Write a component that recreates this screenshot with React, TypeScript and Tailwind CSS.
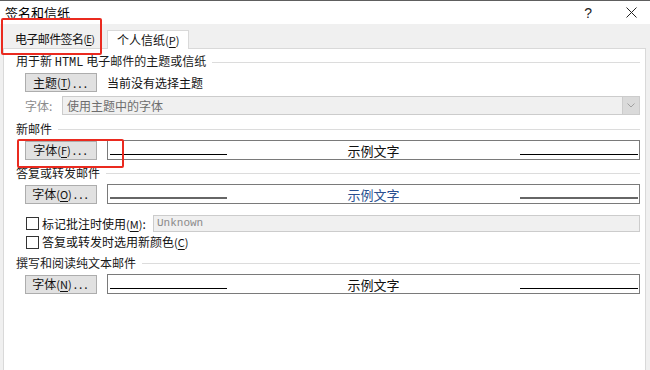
import React from 'react';

const font = { fontFamily: '"Noto Sans CJK SC", "Noto Sans", sans-serif' };

// mnemonic letter like (E), underlined as in Win32 dialogs
const Mn: React.FC<{ k: string; small?: boolean }> = ({ k, small }) => (
  <span className={small ? 'text-[10px]' : 'text-[11px]'}>
    (<span className="underline underline-offset-2">{k}</span>)
  </span>
);

const Dots: React.FC = () => <span className="tracking-[2px] pl-[2px]">...</span>;

const SectionHeader: React.FC<{ children: React.ReactNode; mt: string }> = ({ children, mt }) => (
  <div className={`flex items-center h-[16px] pl-[12px] pr-[5px] ${mt}`}>
    <span className="text-[12px] leading-[16px] text-[#1a1a1a] whitespace-nowrap">{children}</span>
    <div className="flex-1 h-px bg-[#dcdcdc] ml-[6px]" />
  </div>
);

const Btn: React.FC<{ children: React.ReactNode }> = ({ children }) => (
  <div className="w-[72px] h-[19px] bg-[#e1e1e1] border border-[#adadad] flex items-center justify-center text-[12px] leading-none text-[#111] flex-shrink-0 whitespace-nowrap">
    {children}
  </div>
);

const Preview: React.FC<{ color: string; lineCls: string }> = ({ color, lineCls }) => (
  <div className="relative flex-1 h-[20px] ml-[10px] bg-white border border-[#7a7a7a] flex items-center justify-center">
    <span className={`text-[13px] leading-none ${color}`}>示例文字</span>
    <div className={`absolute left-[2px] bottom-[4px] w-[117px] ${lineCls}`} />
    <div className={`absolute right-[1px] bottom-[4px] w-[118px] ${lineCls}`} />
  </div>
);

const FontRow: React.FC<{ k: string; mt: string; color?: string; lineCls?: string }> = ({
  k,
  mt,
  color = 'text-[#111]',
  lineCls = 'h-px bg-black',
}) => (
  <div className={`flex items-center pl-[21px] pr-[5px] ${mt}`}>
    <Btn>
      字体<Mn k={k} />
      <Dots />
    </Btn>
    <Preview color={color} lineCls={lineCls} />
  </div>
);

const Checkbox: React.FC = () => (
  <div className="w-[13px] h-[13px] border border-[#333] bg-white flex-shrink-0" />
);

export default function App() {
  return (
    <div className="relative w-[650px] h-[370px] overflow-hidden bg-white flex flex-col" style={font}>
      {/* title bar */}
      <div className="h-[24px] border-t border-[#5e5e5e] flex items-center pl-[5px] pr-[12px] bg-white">
        <span className="text-[13px] leading-none text-black">签名和信纸</span>
        <div className="flex-1" />
        <span className="text-[14px] leading-none text-[#222] mr-[34px]" style={{ fontFamily: '"Liberation Sans", sans-serif' }}>?</span>
        <svg width="11" height="11" viewBox="0 0 11 11" className="mr-[1px]">
          <path d="M0.5 0.5 L10.5 10.5 M10.5 0.5 L0.5 10.5" stroke="#222" strokeWidth="1" />
        </svg>
      </div>

      {/* body */}
      <div className="flex-1 bg-[#f0f0f0] pl-[3px] pr-[4px] flex flex-col">
        {/* tabs */}
        <div className="h-[24px] flex items-end">
          <div className="h-[18px] w-[104px] flex items-center pl-[12px] text-[12px] leading-none text-[#111] whitespace-nowrap tracking-[-0.6px]">
            电子邮件签名<Mn k="E" small />
          </div>
          <div className="relative z-10 -mb-px h-[19px] w-[82px] bg-white border border-b-0 border-[#d9d9d9] flex items-center pl-[9px] text-[12px] leading-none text-[#111] whitespace-nowrap">
            个人信纸<Mn k="P" />
          </div>
        </div>

        {/* panel */}
        <div className="flex-1 bg-white border border-[#d9d9d9] border-b-0 flex flex-col">
          <SectionHeader mt="mt-[5px]">
            用于新{' '}
            <span className="text-[12px]" style={{ fontFamily: '"Liberation Mono", monospace' }}>
              HTML
            </span>{' '}
            电子邮件的主题或信纸
          </SectionHeader>

          <div className="flex items-center pl-[21px] mt-[3px] h-[19px]">
            <Btn>
              主题<Mn k="T" />
              <Dots />
            </Btn>
            <span className="ml-[10px] text-[12px] leading-none text-[#111]">当前没有选择主题</span>
          </div>

          <div className="flex items-center pl-[21px] pr-[5px] mt-[4px] h-[19px]">
            <span className="w-[37px] text-[12px] leading-none text-[#8c8c8c]">字体:</span>
            <div className="flex-1 h-[19px] bg-[#f0f0f0] border border-[#cccccc] flex items-center">
              <span className="pl-[4px] flex-1 text-[12px] leading-none text-[#6d6d6d]">使用主题中的字体</span>
              <div className="w-[17px] h-full bg-[#dadada] border-l border-[#cccccc] flex items-center justify-center">
                <svg width="8" height="5" viewBox="0 0 8 5">
                  <path d="M0.5 0.5 L4 4 L7.5 0.5" stroke="#a0a0a0" strokeWidth="1" fill="none" />
                </svg>
              </div>
            </div>
          </div>

          <SectionHeader mt="mt-[6px]">新邮件</SectionHeader>
          <FontRow k="F" mt="mt-[3px]" />

          <SectionHeader mt="mt-[5px]">答复或转发邮件</SectionHeader>
          <FontRow k="O" mt="mt-[3px]" color="text-[#2a4f8f]" lineCls="h-[2px] bg-[#666]" />

          <div className="flex items-center pl-[22px] pr-[5px] mt-[11px] h-[17px]">
            <Checkbox />
            <span className="ml-[3px] w-[111px] text-[12px] leading-none text-[#111] whitespace-nowrap">
              标记批注时使用<Mn k="M" />:
            </span>
            <div className="flex-1 h-[17px] bg-[#f0f0f0] border border-[#cccccc] flex items-center pl-[3px]">
              <span className="text-[11px] leading-none text-[#8a8a8a]" style={{ fontFamily: '"Liberation Mono", monospace' }}>
                Unknown
              </span>
            </div>
          </div>

          <div className="flex items-center pl-[22px] mt-[2px] h-[16px]">
            <Checkbox />
            <span className="ml-[3px] text-[12px] leading-none text-[#111] whitespace-nowrap">
              答复或转发时选用新颜色<Mn k="C" />
            </span>
          </div>

          <SectionHeader mt="mt-[5px]">撰写和阅读纯文本邮件</SectionHeader>
          <FontRow k="N" mt="mt-[3px]" />
        </div>
      </div>

      {/* red annotation boxes */}
      <div className="absolute left-[1px] top-[18px] w-[101px] h-[37px] border-2 border-[#ea2a1f] rounded-[2px]" />
      <div className="absolute left-[17px] top-[139px] w-[107px] h-[29px] border-2 border-[#ea2a1f] rounded-[2px]" />
    </div>
  );
}
